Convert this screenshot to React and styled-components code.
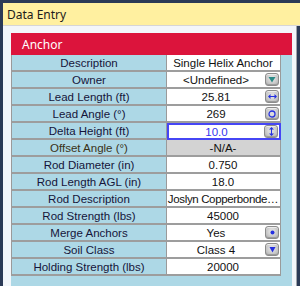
import React from 'react'
import styled, { createGlobalStyle } from 'styled-components'

const GlobalStyle = createGlobalStyle`
  html, body {
    margin: 0;
    padding: 0;
    background: #2b3a56;
  }
`

const Window = styled.div`
  width: 300px;
  height: 286px;
  box-sizing: border-box;
  padding: 3px 0 0 3px;
  background: #2b3a56;
  display: flex;
  flex-direction: column;
  overflow: hidden;
`

const TitleBar = styled.div`
  height: 22px;
  flex: none;
  display: flex;
  align-items: center;
  padding-left: 4px;
  background: #fff0a0;
  border-bottom: 1px solid #d6d6d6;
  font-family: 'Noto Sans', 'Open Sans', sans-serif;
  font-size: 12px;
  color: #1b1b1b;
`

const Body = styled.div`
  flex: 1;
  display: flex;
  flex-direction: column;
  min-height: 0;
  padding: 7px 4px 0 8px;
  background: #f3f6fa;
  border-right: 1px solid #a0a4aa;
  margin-right: 3px;
`

const Header = styled.div`
  height: 22px;
  flex: none;
  display: flex;
  align-items: center;
  padding-left: 11px;
  background: #dc143c;
  color: #fff;
  font-family: 'Noto Sans', 'Open Sans', sans-serif;
  font-size: 12px;
`

const Grid = styled.div`
  flex: 1;
  background: #add8e6;
  display: grid;
  grid-template-columns: 156px 114px;
  grid-auto-rows: 17px;
  align-content: start;
  font-family: 'Liberation Sans', Arial, sans-serif;
  font-size: 11.5px;
`

const Label = styled.div`
  box-sizing: border-box;
  border-left: 1px solid #9a9a9a;
  border-right: 1px solid #9a9a9a;
  border-bottom: 2px solid #9d9d9d;
  display: flex;
  align-items: center;
  justify-content: center;
  color: ${p => p.$tone || '#15153a'};
  white-space: nowrap;
`

const Value = styled.div`
  box-sizing: border-box;
  border-right: 1px solid #9a9a9a;
  border-bottom: 2px solid #9d9d9d;
  background: ${p => (p.$disabled ? '#d3d3d3' : '#fff')};
  display: flex;
  align-items: center;
  padding-right: 1px;
  color: #111;
  white-space: nowrap;
  overflow: hidden;
  ${p =>
    p.$active &&
    `
    border: 2px solid #4646f5;
    color: #3535f0;
  `}
`

const ValueText = styled.span`
  flex: 1;
  text-align: center;
  letter-spacing: ${p => (p.$tight ? '-0.35px' : 'normal')};
`

const Btn = styled.span`
  flex: none;
  width: 14px;
  height: 13px;
  box-sizing: border-box;
  border-radius: 3px;
  border: 1px solid #8c8c8c;
  background: radial-gradient(circle at 50% 40%, #dcdcdc 30%, #adadad 100%);
  box-shadow: inset 0 1px 0 #ececec, inset 0 -1px 0 #9c9c9c;
  display: flex;
  align-items: center;
  justify-content: center;
`

const glyphs = {
  drop: (
    <svg width="8" height="7" viewBox="0 0 8 7">
      <path d="M0.5 1h7L4 6.5z" fill="#2b8a86" />
    </svg>
  ),
  horiz: (
    <svg width="9" height="5" viewBox="0 0 9 5">
      <path d="M0 2.5L2.5 0v5zM9 2.5L6.5 0v5z" fill="#2530e0" />
      <rect x="2" y="2" width="5" height="1" fill="#2530e0" />
    </svg>
  ),
  circle: (
    <svg width="8" height="8" viewBox="0 0 8 8">
      <circle cx="4" cy="4" r="3" fill="none" stroke="#2530e0" strokeWidth="1.3" />
    </svg>
  ),
  vert: (
    <svg width="5" height="9" viewBox="0 0 5 9">
      <path d="M2.5 0L0 2.5h5zM2.5 9L0 6.5h5z" fill="#2530e0" />
      <rect x="2" y="2" width="1" height="5" fill="#2530e0" />
    </svg>
  ),
  dot: (
    <svg width="5" height="5" viewBox="0 0 5 5">
      <circle cx="2.5" cy="2.5" r="2" fill="#2530e0" />
    </svg>
  ),
  down: (
    <svg width="7" height="7" viewBox="0 0 7 7">
      <path d="M0.5 1h6L3.5 6.5z" fill="#2530e0" />
    </svg>
  ),
}

const rows = [
  { label: 'Description', value: 'Single Helix Anchor' },
  { label: 'Owner', value: '<Undefined>', icon: 'drop' },
  { label: 'Lead Length (ft)', value: '25.81', icon: 'horiz' },
  { label: 'Lead Angle (°)', value: '269', icon: 'circle' },
  { label: 'Delta Height (ft)', value: '10.0', icon: 'vert', active: true },
  { label: 'Offset Angle (°)', value: '-N/A-', disabled: true, tone: '#3a3218' },
  { label: 'Rod Diameter (in)', value: '0.750' },
  { label: 'Rod Length AGL (in)', value: '18.0' },
  { label: 'Rod Description', value: 'Joslyn Copperbonde…', tight: true },
  { label: 'Rod Strength (lbs)', value: '45000' },
  { label: 'Merge Anchors', value: 'Yes', icon: 'dot' },
  { label: 'Soil Class', value: 'Class 4', icon: 'down' },
  { label: 'Holding Strength (lbs)', value: '20000' },
]

export default function App() {
  return (
    <Window>
      <GlobalStyle />
      <TitleBar>Data Entry</TitleBar>
      <Body>
        <Header>Anchor</Header>
        <Grid>
          {rows.map(r => (
            <React.Fragment key={r.label}>
              <Label $tone={r.tone}>{r.label}</Label>
              <Value $disabled={r.disabled} $active={r.active}>
                <ValueText $tight={r.tight}>{r.value}</ValueText>
                {r.icon && <Btn>{glyphs[r.icon]}</Btn>}
              </Value>
            </React.Fragment>
          ))}
        </Grid>
      </Body>
    </Window>
  )
}
